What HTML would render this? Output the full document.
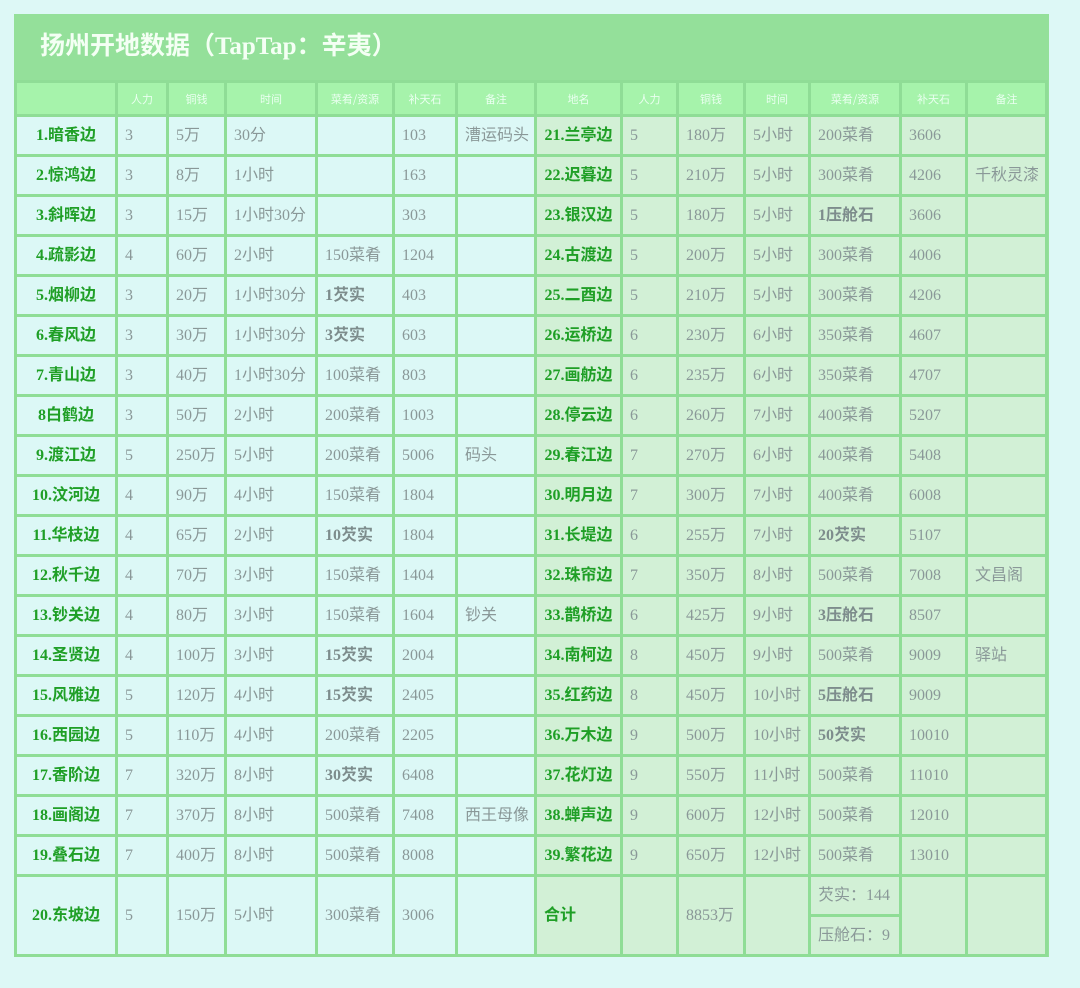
<!DOCTYPE html>
<html><head><meta charset="utf-8">
<style>
html,body{margin:0;padding:0;background:#ddf8f6;width:1080px;height:988px;overflow:hidden}
.wrap{position:absolute;left:14px;top:14px;width:1035px;background:#94e09a}
.title{height:66px;padding-left:26px;color:#f4fff4;font:bold 25px "Liberation Serif","Noto Sans CJK SC",serif;line-height:66px;box-sizing:border-box}
table{border-collapse:collapse;table-layout:fixed;width:1033px;}
td{border:3px solid #8fdd96;padding:0;text-indent:7px;height:37px;font:16px "Liberation Serif","Noto Sans CJK SC",serif;line-height:20px;vertical-align:middle;color:#8a9898;white-space:nowrap;overflow:hidden;background:#dcf8f6}
tr.h td{height:31px;background:#a6f3ab;color:#eafff0;font:11px "Noto Sans CJK SC",sans-serif;line-height:14px;text-align:center;text-indent:0}
td.n{font:bold 16px "Liberation Serif","Noto Sans CJK SC",serif;line-height:20px;color:#1f9f26;text-align:center;text-indent:0}
td.r{background:#d2f0d6}
b{font-weight:bold;color:#7d8c8c}
tr.last td{height:37px}
</style></head><body>
<div class="wrap">
<div class="title">扬州开地数据（TapTap：辛夷）</div>
<table>
<colgroup><col style="width:101px"><col style="width:51px"><col style="width:58px"><col style="width:91px"><col style="width:77px"><col style="width:63px"><col style="width:79px"><col style="width:86px"><col style="width:56px"><col style="width:67px"><col style="width:65px"><col style="width:91px"><col style="width:66px"><col style="width:80px"></colgroup>
<tr class="h"><td></td><td>人力</td><td>铜钱</td><td>时间</td><td>菜肴/资源</td><td>补天石</td><td>备注</td><td>地名</td><td>人力</td><td>铜钱</td><td>时间</td><td>菜肴/资源</td><td>补天石</td><td>备注</td></tr>
<tr><td class="n">1.暗香边</td><td>3</td><td>5万</td><td>30分</td><td></td><td>103</td><td>漕运码头</td><td class="n r">21.兰亭边</td><td class="r">5</td><td class="r">180万</td><td class="r">5小时</td><td class="r">200菜肴</td><td class="r">3606</td><td class="r"></td></tr>
<tr><td class="n">2.惊鸿边</td><td>3</td><td>8万</td><td>1小时</td><td></td><td>163</td><td></td><td class="n r">22.迟暮边</td><td class="r">5</td><td class="r">210万</td><td class="r">5小时</td><td class="r">300菜肴</td><td class="r">4206</td><td class="r">千秋灵漆</td></tr>
<tr><td class="n">3.斜晖边</td><td>3</td><td>15万</td><td>1小时30分</td><td></td><td>303</td><td></td><td class="n r">23.银汉边</td><td class="r">5</td><td class="r">180万</td><td class="r">5小时</td><td class="r"><b>1压舱石</b></td><td class="r">3606</td><td class="r"></td></tr>
<tr><td class="n">4.疏影边</td><td>4</td><td>60万</td><td>2小时</td><td>150菜肴</td><td>1204</td><td></td><td class="n r">24.古渡边</td><td class="r">5</td><td class="r">200万</td><td class="r">5小时</td><td class="r">300菜肴</td><td class="r">4006</td><td class="r"></td></tr>
<tr><td class="n">5.烟柳边</td><td>3</td><td>20万</td><td>1小时30分</td><td><b>1芡实</b></td><td>403</td><td></td><td class="n r">25.二酉边</td><td class="r">5</td><td class="r">210万</td><td class="r">5小时</td><td class="r">300菜肴</td><td class="r">4206</td><td class="r"></td></tr>
<tr><td class="n">6.春风边</td><td>3</td><td>30万</td><td>1小时30分</td><td><b>3芡实</b></td><td>603</td><td></td><td class="n r">26.运桥边</td><td class="r">6</td><td class="r">230万</td><td class="r">6小时</td><td class="r">350菜肴</td><td class="r">4607</td><td class="r"></td></tr>
<tr><td class="n">7.青山边</td><td>3</td><td>40万</td><td>1小时30分</td><td>100菜肴</td><td>803</td><td></td><td class="n r">27.画舫边</td><td class="r">6</td><td class="r">235万</td><td class="r">6小时</td><td class="r">350菜肴</td><td class="r">4707</td><td class="r"></td></tr>
<tr><td class="n">8白鹤边</td><td>3</td><td>50万</td><td>2小时</td><td>200菜肴</td><td>1003</td><td></td><td class="n r">28.停云边</td><td class="r">6</td><td class="r">260万</td><td class="r">7小时</td><td class="r">400菜肴</td><td class="r">5207</td><td class="r"></td></tr>
<tr><td class="n">9.渡江边</td><td>5</td><td>250万</td><td>5小时</td><td>200菜肴</td><td>5006</td><td>码头</td><td class="n r">29.春江边</td><td class="r">7</td><td class="r">270万</td><td class="r">6小时</td><td class="r">400菜肴</td><td class="r">5408</td><td class="r"></td></tr>
<tr><td class="n">10.汶河边</td><td>4</td><td>90万</td><td>4小时</td><td>150菜肴</td><td>1804</td><td></td><td class="n r">30.明月边</td><td class="r">7</td><td class="r">300万</td><td class="r">7小时</td><td class="r">400菜肴</td><td class="r">6008</td><td class="r"></td></tr>
<tr><td class="n">11.华枝边</td><td>4</td><td>65万</td><td>2小时</td><td><b>10芡实</b></td><td>1804</td><td></td><td class="n r">31.长堤边</td><td class="r">6</td><td class="r">255万</td><td class="r">7小时</td><td class="r"><b>20芡实</b></td><td class="r">5107</td><td class="r"></td></tr>
<tr><td class="n">12.秋千边</td><td>4</td><td>70万</td><td>3小时</td><td>150菜肴</td><td>1404</td><td></td><td class="n r">32.珠帘边</td><td class="r">7</td><td class="r">350万</td><td class="r">8小时</td><td class="r">500菜肴</td><td class="r">7008</td><td class="r">文昌阁</td></tr>
<tr><td class="n">13.钞关边</td><td>4</td><td>80万</td><td>3小时</td><td>150菜肴</td><td>1604</td><td>钞关</td><td class="n r">33.鹊桥边</td><td class="r">6</td><td class="r">425万</td><td class="r">9小时</td><td class="r"><b>3压舱石</b></td><td class="r">8507</td><td class="r"></td></tr>
<tr><td class="n">14.圣贤边</td><td>4</td><td>100万</td><td>3小时</td><td><b>15芡实</b></td><td>2004</td><td></td><td class="n r">34.南柯边</td><td class="r">8</td><td class="r">450万</td><td class="r">9小时</td><td class="r">500菜肴</td><td class="r">9009</td><td class="r">驿站</td></tr>
<tr><td class="n">15.风雅边</td><td>5</td><td>120万</td><td>4小时</td><td><b>15芡实</b></td><td>2405</td><td></td><td class="n r">35.红药边</td><td class="r">8</td><td class="r">450万</td><td class="r">10小时</td><td class="r"><b>5压舱石</b></td><td class="r">9009</td><td class="r"></td></tr>
<tr><td class="n">16.西园边</td><td>5</td><td>110万</td><td>4小时</td><td>200菜肴</td><td>2205</td><td></td><td class="n r">36.万木边</td><td class="r">9</td><td class="r">500万</td><td class="r">10小时</td><td class="r"><b>50芡实</b></td><td class="r">10010</td><td class="r"></td></tr>
<tr><td class="n">17.香阶边</td><td>7</td><td>320万</td><td>8小时</td><td><b>30芡实</b></td><td>6408</td><td></td><td class="n r">37.花灯边</td><td class="r">9</td><td class="r">550万</td><td class="r">11小时</td><td class="r">500菜肴</td><td class="r">11010</td><td class="r"></td></tr>
<tr><td class="n">18.画阁边</td><td>7</td><td>370万</td><td>8小时</td><td>500菜肴</td><td>7408</td><td>西王母像</td><td class="n r">38.蝉声边</td><td class="r">9</td><td class="r">600万</td><td class="r">12小时</td><td class="r">500菜肴</td><td class="r">12010</td><td class="r"></td></tr>
<tr><td class="n">19.叠石边</td><td>7</td><td>400万</td><td>8小时</td><td>500菜肴</td><td>8008</td><td></td><td class="n r">39.繁花边</td><td class="r">9</td><td class="r">650万</td><td class="r">12小时</td><td class="r">500菜肴</td><td class="r">13010</td><td class="r"></td></tr>
<tr class="last"><td class="n" rowspan="2">20.东坡边</td><td rowspan="2">5</td><td rowspan="2">150万</td><td rowspan="2">5小时</td><td rowspan="2">300菜肴</td><td rowspan="2">3006</td><td rowspan="2"></td><td class="n r" rowspan="2" style="text-align:left;text-indent:7px">合计</td><td class="r" rowspan="2"></td><td class="r" rowspan="2">8853万</td><td class="r" rowspan="2"></td><td class="r">芡实：144</td><td class="r" rowspan="2"></td><td class="r" rowspan="2"></td></tr>
<tr class="last"><td class="r">压舱石：9</td></tr>
</table>
</div>
</body></html>
